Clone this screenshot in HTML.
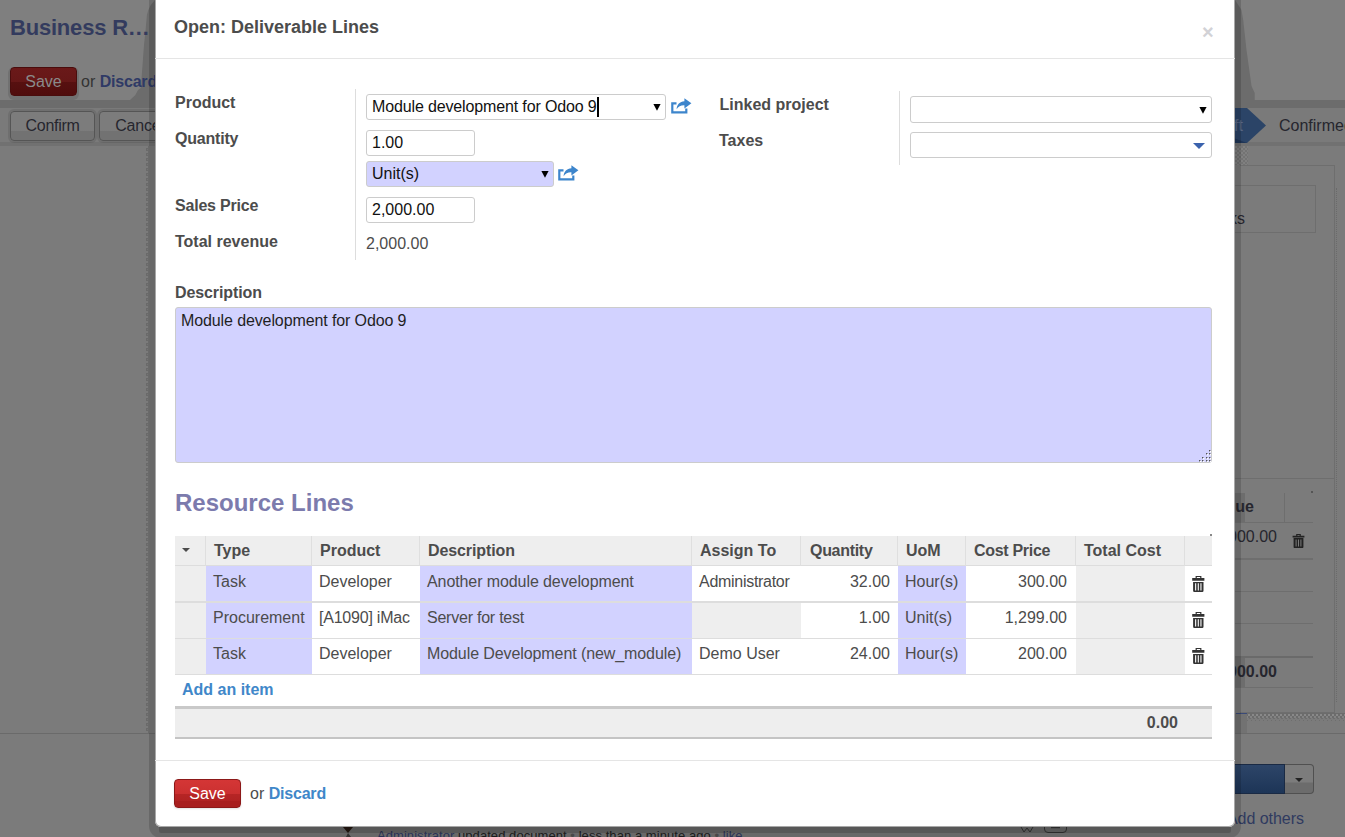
<!DOCTYPE html>
<html>
<head>
<meta charset="utf-8">
<title>Open: Deliverable Lines</title>
<style>
html,body{margin:0;padding:0;}
body{width:1345px;height:837px;overflow:hidden;position:relative;background:#fff;font-family:"Liberation Sans",sans-serif;font-size:13px;color:#4c4c4c;}
*{box-sizing:border-box;}
.abs{position:absolute;}
/* ---------- background page ---------- */
#bg{position:absolute;left:0;top:0;width:1345px;height:837px;overflow:hidden;background:#7b7b7b;}
#bg .title{left:10px;top:15px;font-size:22px;font-weight:bold;color:#333b5e;white-space:nowrap;line-height:26px;letter-spacing:-0.2px;}
#bg .btn-red{left:10px;top:67px;width:67px;height:29px;box-shadow:0 2px 0 2px rgba(0,0,0,.11);border-radius:4px;border:1px solid #4a0d0d;background:linear-gradient(#6a1919 0,#661717 50%,#571010 51%,#500d0d 100%);color:#8a8a8a;font-size:16px;line-height:27px;text-align:center;}
#bg .btn{height:30px;box-shadow:0 0 0 2px rgba(0,0,0,.09);border:1px solid #555;border-radius:4px;background:linear-gradient(#7c7c7c 0,#7c7c7c 66%,#727272 67%,#727272 100%);color:#26262e;font-size:16px;line-height:28px;text-align:center;}
/* ---------- modal ---------- */
#modal{position:absolute;left:155px;top:-10px;width:1080px;height:837px;background:#fff;border-radius:6px;box-shadow:inset 0 0 0 1px #a8a8a8,0 10px 0 -4px rgba(0,0,0,.16),0 5px 0 6px rgba(0,0,0,.15);}
#modal .hdr{left:0;top:0;width:1080px;height:69px;border-bottom:1px solid #e5e5e5;}
#modal h3{position:absolute;left:19px;top:25px;margin:0;font-size:18px;font-weight:bold;color:#4c4c4c;line-height:24px;white-space:nowrap;}
.close{position:absolute;left:1047px;top:30px;font-size:20px;font-weight:bold;color:#d2d2d6;line-height:24px;}
.lbl{position:absolute;font-weight:bold;font-size:16px;color:#4c4c4c;white-space:nowrap;line-height:20px;}
.inp{position:absolute;height:26px;border:1px solid #ccc;border-radius:3px;background:#fff;font-size:16px;color:#111;line-height:23px;padding-left:5px;white-space:nowrap;}
.req{background:#d2d2ff;}
.vsep{position:absolute;width:1px;background:#ddd;}
.caret{position:absolute;width:0;height:0;border-left:3.5px solid transparent;border-right:3.5px solid transparent;border-top:6.5px solid #000;}
table{border-collapse:separate;border-spacing:0;}
.cursor{position:absolute;left:230px;top:2px;width:2px;height:20px;background:#000;}
.ta{border:1px solid #ccc;border-radius:3px;background:#d2d2ff;font-size:16px;line-height:20px;color:#1f1f1f;padding:3px 5px;}

.lst{table-layout:fixed;font-size:16px;color:#4c4c4c;}
.lst th{height:30px;background:#eee;border-bottom:1px solid #ddd;border-right:1px solid #dfdfdf;text-align:left;font-weight:bold;padding:1px 0 0 8px;line-height:20px;white-space:nowrap;overflow:hidden;}
.lst th.h0{padding:0;position:relative;}
.lst th.hl{border-right:0;}
.lst td{height:36px;border-bottom:1px solid #ddd;padding:0 0 6px 7px;line-height:20px;white-space:nowrap;overflow:hidden;background:#fff;}
.lst tr.r0 td{height:37px;border-bottom:2px solid #ddd;padding-bottom:3px;}
.lst tr.r1 td{height:36px;}
.lst td.p{background:#d2d2ff;}
.lst td.g{background:#eee;}
.lst td.n{text-align:right;padding-right:8px;}
.lst td.tr{padding:0 0 0 7px;vertical-align:top;}
.trash{display:block;margin-top:9px;}
.lst tr.r0 .trash{margin-top:10px;}
.caret2{position:absolute;left:7px;top:12px;width:0;height:0;border-left:4px solid transparent;border-right:4px solid transparent;border-top:4px solid #4c4c4c;}
.add{font-size:16px;font-weight:bold;color:#3f87c9;line-height:20px;white-space:nowrap;}
.tfoot{background:#eee;border-top:3px solid #c9c9c9;border-bottom:2px solid #c4c4c4;font-size:16px;font-weight:bold;color:#4c4c4c;line-height:20px;}
.ftr{background:#e5e5e5;}
.btn-red2{width:67px;height:29px;border-radius:4px;border:1px solid #8c1818;box-shadow:0 1px 2px rgba(0,0,0,.12);background:linear-gradient(#d43636 0,#cb3030 52%,#b62525 53%,#b02222 78%,#a81e1e 79%,#a81e1e 100%);color:#fff;font-size:16px;line-height:27px;text-align:center;}
.sep{font-size:24px;font-weight:bold;color:#7c7bad;line-height:30px;white-space:nowrap;}

</style>
</head>
<body>
<div id="bg">
  <!-- top header area -->
  <div class="abs" style="left:0;top:0;width:1345px;height:100px;background:#7f7f7f;"></div>
  <div class="abs" style="left:0;top:100px;width:1345px;height:8px;background:#6c6c6c;"></div>
  <div class="abs" style="left:0;top:108px;width:1345px;height:34px;background:#7a7a7a;"></div>
  <div class="abs" style="left:0;top:142px;width:1345px;height:4px;background:#717171;"></div>
  <svg class="abs" style="left:0;top:0;" width="1345" height="160" viewBox="0 0 1345 160">
    <path d="M155 0L150.8 5L148.3 10L146.9 15L145.6 30L144 45L142.9 60L141.8 75L140.8 88L138 90L135.4 95L130 100L155 100Z" fill="#6c6c6c"/>
    <path d="M1235 0L1241.5 10L1243.2 20L1246.5 50L1251.5 86L1254.7 93L1254.7 100L1235 100Z" fill="#6c6c6c"/>
    <!-- status arrow -->
    <path d="M1200 108H1247L1266 125.5L1247 143H1200Z" fill="#2b4467"/>
    <path d="M1200 125.5L1247 143H1200Z" fill="#1f3556"/>
  </svg>
  <div class="abs" style="left:1195px;top:116px;width:48px;text-align:right;font-size:16px;line-height:20px;color:#566684;white-space:nowrap;">Draft</div>
  <div class="abs title">Business R…</div>
  <div class="abs btn-red">Save</div>
  <div class="abs" style="left:81px;top:72px;font-size:16px;line-height:20px;color:#333;white-space:nowrap;">or <b style="color:#2f3a66;letter-spacing:-0.2px">Discard</b></div>
  <div class="abs btn" style="left:10px;top:111px;width:85px;letter-spacing:-0.3px;">Confirm</div>
  <div class="abs btn" style="left:99px;top:111px;width:81px;letter-spacing:-0.2px;">Cancel</div>
  <div class="abs" style="left:1279px;top:116px;font-size:16px;line-height:20px;color:#26262e;white-space:nowrap;">Confirmed</div>

  <!-- sheet right -->
  <div class="abs" style="left:1240px;top:165px;width:95px;height:548px;border:1px solid #6e6e6e;border-left:0;"></div>
  <div class="abs" style="left:1200px;top:185px;width:116px;height:48px;border:1px solid #6e6e6e;"></div>
  <div class="abs" style="left:1200px;top:209px;width:45px;text-align:right;font-size:16px;line-height:20px;color:#26262e;">Tasks</div>
  <div class="abs" style="left:1336px;top:188px;width:0;height:514px;border-left:1px dotted #6a6a6a;"></div>
  <div class="abs" style="left:1235px;top:478px;width:100px;height:1px;background:#6e6e6e;"></div>
  <div class="abs" style="left:1235px;top:493px;width:10px;height:30px;background:#6d6d6d;"></div>
  <div class="abs" style="left:1284px;top:493px;width:1px;height:30px;background:#6e6e6e;"></div>
  <div class="abs" style="left:1200px;top:497px;width:54px;text-align:right;font-size:16px;font-weight:bold;line-height:20px;color:#26262e;">Value</div>
  <div class="abs" style="left:1235px;top:522px;width:78px;height:1px;background:#6e6e6e;"></div>
  <div class="abs" style="left:1200px;top:527px;width:77px;text-align:right;font-size:16px;line-height:20px;color:#26262e;">2,000.00</div>
  <svg class="abs" style="left:1292px;top:533px;" width="13" height="16" viewBox="0 0 13 15"><path d="M4.2 0.6H8.8V2.2H12.4V4H0.6V2.2H4.2ZM5.4 1.5V2.2H7.6V1.5Z" fill="#222"/><path d="M1.6 4.6H11.4V13.4Q11.4 14.6 10.2 14.6H2.8Q1.6 14.6 1.6 13.4ZM3.6 6V13H4.6V6ZM6 6V13H7V6ZM8.4 6V13H9.4V6Z" fill="#222" fill-rule="evenodd"/></svg>
  <div class="abs" style="left:1235px;top:558px;width:78px;height:2px;background:#6e6e6e;"></div>
  <div class="abs" style="left:1235px;top:591px;width:78px;height:1px;background:#6e6e6e;"></div>
  <div class="abs" style="left:1235px;top:623px;width:78px;height:1px;background:#6e6e6e;"></div>
  <div class="abs" style="left:1235px;top:656px;width:78px;height:2px;background:#6a6a6a;"></div>
  <div class="abs" style="left:1235px;top:658px;width:10px;height:29px;background:#6d6d6d;"></div>
  <div class="abs" style="left:1200px;top:662px;width:77px;text-align:right;font-size:16px;font-weight:bold;line-height:20px;color:#26262e;">2,000.00</div>
  <div class="abs" style="left:1235px;top:687px;width:78px;height:1px;background:#6e6e6e;"></div>
  <div class="abs" style="left:1311px;top:491px;width:2px;height:2px;background:#555;"></div>

  <svg class="abs" style="left:0;top:0;" width="1345" height="837" viewBox="0 0 1345 837">
    <defs>
      <pattern id="d1" x="1240" y="714" width="4" height="8" patternUnits="userSpaceOnUse">
        <rect x="0" y="0" width="2" height="2" fill="#898989"/><rect x="2" y="0" width="2" height="2" fill="#6c6c6c"/>
        <rect x="0" y="2" width="2" height="2" fill="#6c6c6c"/><rect x="2" y="2" width="2" height="2" fill="#838383"/>
        <rect x="1" y="4" width="2" height="1" fill="#6e6e6e"/>
        <rect x="3" y="6" width="1" height="1" fill="#6e6e6e"/>
      </pattern>
      <pattern id="d2" x="146" y="146" width="3" height="5" patternUnits="userSpaceOnUse">
        <rect x="0" y="0" width="3" height="5" fill="#6a6a6a"/>
        <rect x="0" y="0" width="2" height="2" fill="#7b7b7b"/><rect x="1" y="3" width="1" height="1" fill="#747474"/>
      </pattern>
      <pattern id="d3" x="1235" y="146" width="4" height="4" patternUnits="userSpaceOnUse">
        <rect x="0" y="0" width="4" height="4" fill="#737373"/>
        <rect x="0" y="0" width="2" height="2" fill="#808080"/><rect x="2" y="2" width="2" height="2" fill="#808080"/>
      </pattern>
    </defs>
    <rect x="1240" y="714" width="105" height="8" fill="url(#d1)"/>
    <rect x="146" y="146" width="3" height="587" fill="url(#d2)"/>
    <rect x="1235" y="146" width="13" height="19" fill="url(#d3)"/>
    <rect x="1235" y="713" width="12" height="20" fill="#727272"/>
    <rect x="1247" y="713" width="98" height="1" fill="#6c6c6c"/>
    <rect x="1236" y="713" width="11" height="1" fill="#3a4a78"/>
  </svg>
  <!-- bottom area -->
  <div class="abs" style="left:0;top:733px;width:1345px;height:1px;background:#6a6a6a;"></div>
  <div class="abs" style="left:1200px;top:764px;width:85px;height:30px;background:linear-gradient(#2d4568,#1d3557);border:1px solid #1a2a44;"></div>
  <div class="abs" style="left:1285px;top:764px;width:29px;height:30px;border:1px solid #505050;border-left:0;border-radius:0 4px 4px 0;background:linear-gradient(#7c7c7c 0,#7c7c7c 62%,#6c6c6c 63%,#6c6c6c 100%);"></div>
  <div class="abs" style="left:1295px;top:778px;width:0;height:0;border-left:4px solid transparent;border-right:4px solid transparent;border-top:4px solid #222;"></div>
  <div class="abs" style="left:1227px;top:809px;font-size:16px;line-height:20px;color:#2f3a60;white-space:nowrap;letter-spacing:-0.05px;">Add others</div>
  <div class="abs" style="left:377px;top:826px;font-size:13px;line-height:20px;color:#222;white-space:nowrap;letter-spacing:0.06px;"><span style="color:#323c66">Administrator</span> updated document <span style="color:#555">•</span> less than a minute ago <span style="color:#555">•</span> <span style="color:#323c66">like</span></div>
  <svg class="abs" style="left:330px;top:826px;" width="760" height="11" viewBox="0 0 760 11">
    <path d="M13 1H23L18 7Z" fill="#2a1c14"/>
    <path d="M16 11L18 7L21 11Z" fill="#3a3a3a"/>
    <path d="M691 1L694 6L697 2L700 6L703 1" fill="none" stroke="#3c3c3c" stroke-width="1"/>
    <path d="M714.5 0V3Q714.5 6.5 718 6.5H733Q736.5 6.5 736.5 3V0" fill="none" stroke="#3c3c3c" stroke-width="1"/>
    <path d="M721 1.5H730" fill="none" stroke="#3c3c3c" stroke-width="1.4"/>
  </svg>
</div>
<div id="modal">

  <div class="abs hdr"></div>
  <h3>Open: Deliverable Lines</h3>
  <div class="close">×</div>

  <!-- left group -->
  <div class="lbl" style="left:20px;top:103px;">Product</div>
  <div class="lbl" style="left:20px;top:139px;letter-spacing:-0.2px;">Quantity</div>
  <div class="lbl" style="left:20px;top:206px;letter-spacing:-0.2px;">Sales Price</div>
  <div class="lbl" style="left:20px;top:242px;">Total revenue</div>
  <div class="vsep" style="left:200px;top:99px;height:171px;"></div>
  <div class="inp" style="left:211px;top:104px;width:300px;"><span style="letter-spacing:-0.14px">Module development for Odoo 9</span><span class="cursor"></span></div>
  <svg class="abs" style="left:497.5px;top:114.1px;" width="8" height="7" viewBox="0 0 8 7"><path d="M0.4 0H7.6L4 6.8Z" fill="#000"/></svg>
  <svg class="abs share" style="left:515px;top:108px;" width="22" height="16" viewBox="0 0 22 16"><path d="M1.2 4.2H6.5V6.4H3.4V13.2H15.2V10.6H17.4V15.4H1.2Z" fill="#3d85cc"/><path d="M14.4 0.2L21.4 5.3L14.4 10.4V7.3C10.8 7.2 8.3 8.4 6.6 11.3C6.9 6.6 9.8 3.6 14.4 3.3Z" fill="#3d85cc"/></svg>
  <div class="inp" style="left:211px;top:140px;width:109px;">1.00</div>
  <div class="inp req" style="left:211px;top:171px;width:188px;">Unit(s)</div>
  <svg class="abs" style="left:385.5px;top:181.1px;" width="8" height="7" viewBox="0 0 8 7"><path d="M0.4 0H7.6L4 6.8Z" fill="#000"/></svg>
  <svg class="abs share" style="left:402px;top:175px;" width="22" height="16" viewBox="0 0 22 16"><path d="M1.2 4.2H6.5V6.4H3.4V13.2H15.2V10.6H17.4V15.4H1.2Z" fill="#3d85cc"/><path d="M14.4 0.2L21.4 5.3L14.4 10.4V7.3C10.8 7.2 8.3 8.4 6.6 11.3C6.9 6.6 9.8 3.6 14.4 3.3Z" fill="#3d85cc"/></svg>
  <div class="inp" style="left:211px;top:207px;width:109px;">2,000.00</div>
  <div class="abs" style="left:211px;top:244px;font-size:16px;line-height:20px;color:#4c4c4c;">2,000.00</div>

  <!-- right group -->
  <div class="lbl" style="left:564.5px;top:105px;">Linked project</div>
  <div class="lbl" style="left:564px;top:141px;">Taxes</div>
  <div class="vsep" style="left:744px;top:101px;height:74px;"></div>
  <div class="inp" style="left:755px;top:106px;width:302px;height:27px;"></div>
  <svg class="abs" style="left:1043.5px;top:116.6px;" width="8" height="7" viewBox="0 0 8 7"><path d="M0.4 0H7.6L4 6.8Z" fill="#000"/></svg>
  <div class="inp" style="left:755px;top:142px;width:302px;"></div>
  <div class="caret" style="left:1038px;top:153px;border-left-width:6px;border-right-width:6px;border-top:6px solid #3a62ad;"></div>

  <!-- description -->
  <div class="lbl" style="left:20px;top:293px;letter-spacing:-0.1px;">Description</div>
  <div class="abs ta" style="left:20px;top:317px;width:1037px;height:156px;letter-spacing:-0.11px;">Module development for Odoo 9</div>

<svg class="abs" style="left:1040px;top:456px;" width="16" height="16" viewBox="0 0 16 16"><rect x="14" y="4" width="1.4" height="1.4" fill="#555"/><rect x="15" y="5" width="1.4" height="1.4" fill="#fff"/><rect x="11" y="7" width="1.4" height="1.4" fill="#555"/><rect x="12" y="8" width="1.4" height="1.4" fill="#fff"/><rect x="14" y="7" width="1.4" height="1.4" fill="#555"/><rect x="15" y="8" width="1.4" height="1.4" fill="#fff"/><rect x="7" y="11" width="1.4" height="1.4" fill="#555"/><rect x="8" y="12" width="1.4" height="1.4" fill="#fff"/><rect x="11" y="11" width="1.4" height="1.4" fill="#555"/><rect x="12" y="12" width="1.4" height="1.4" fill="#fff"/><rect x="14" y="11" width="1.4" height="1.4" fill="#555"/><rect x="15" y="12" width="1.4" height="1.4" fill="#fff"/><rect x="4" y="14" width="1.4" height="1.4" fill="#555"/><rect x="5" y="15" width="1.4" height="1.4" fill="#fff"/><rect x="7" y="14" width="1.4" height="1.4" fill="#555"/><rect x="8" y="15" width="1.4" height="1.4" fill="#fff"/><rect x="11" y="14" width="1.4" height="1.4" fill="#555"/><rect x="12" y="15" width="1.4" height="1.4" fill="#fff"/><rect x="14" y="14" width="1.4" height="1.4" fill="#555"/><rect x="15" y="15" width="1.4" height="1.4" fill="#fff"/></svg>
  <div class="abs" style="left:1055px;top:544px;width:2px;height:2px;background:#888;"></div>
  <div class="abs sep" style="left:20px;top:498px;">Resource Lines</div>

  <table class="abs lst" style="left:20px;top:546px;width:1037px;">
    <colgroup><col style="width:31px"><col style="width:106px"><col style="width:108px"><col style="width:272px"><col style="width:109px"><col style="width:97px"><col style="width:68px"><col style="width:110px"><col style="width:109px"><col style="width:27px"></colgroup>
    <thead><tr><th class="h0"><span class="caret2"></span></th><th>Type</th><th>Product</th><th style="letter-spacing:-0.1px">Description</th><th>Assign To</th><th style="letter-spacing:-0.3px;padding-left:9px">Quantity</th><th>UoM</th><th style="letter-spacing:-0.3px">Cost Price</th><th>Total Cost</th><th class="hl"></th></tr></thead>
    <tbody>
      <tr class="r0"><td class="g"></td><td class="p">Task</td><td>Developer</td><td class="p" style="letter-spacing:-0.09px">Another module development</td><td style="letter-spacing:-0.29px">Administrator</td><td class="n">32.00</td><td class="p">Hour(s)</td><td class="n" style="padding-right:9px">300.00</td><td class="g"></td><td class="tr"><svg class="trash" width="13" height="16" viewBox="0 0 13 16"><path d="M3.6 0H9.4V2H12.4V4.8H0.2V2H3.6ZM4.8 1V2H8.2V1Z" fill="#333"/><path d="M1.1 6H11.5V14.8Q11.5 16 10.3 16H2.3Q1.1 16 1.1 14.8ZM3.1 7.2V14.6H4.2V7.2ZM5.75 7.2V14.6H6.85V7.2ZM8.4 7.2V14.6H9.5V7.2Z" fill="#333" fill-rule="evenodd"/></svg></td></tr>
      <tr class="r1"><td class="g"></td><td class="p">Procurement</td><td style="letter-spacing:-0.22px">[A1090] iMac</td><td class="p" style="letter-spacing:-0.23px">Server for test</td><td class="g"></td><td class="n">1.00</td><td class="p">Unit(s)</td><td class="n" style="padding-right:9px">1,299.00</td><td class="g"></td><td class="tr"><svg class="trash" width="13" height="16" viewBox="0 0 13 16"><path d="M3.6 0H9.4V2H12.4V4.8H0.2V2H3.6ZM4.8 1V2H8.2V1Z" fill="#333"/><path d="M1.1 6H11.5V14.8Q11.5 16 10.3 16H2.3Q1.1 16 1.1 14.8ZM3.1 7.2V14.6H4.2V7.2ZM5.75 7.2V14.6H6.85V7.2ZM8.4 7.2V14.6H9.5V7.2Z" fill="#333" fill-rule="evenodd"/></svg></td></tr>
      <tr class="r2"><td class="g"></td><td class="p">Task</td><td>Developer</td><td class="p" style="letter-spacing:-0.09px">Module Development (new_module)</td><td>Demo User</td><td class="n">24.00</td><td class="p">Hour(s)</td><td class="n" style="padding-right:9px">200.00</td><td class="g"></td><td class="tr"><svg class="trash" width="13" height="16" viewBox="0 0 13 16"><path d="M3.6 0H9.4V2H12.4V4.8H0.2V2H3.6ZM4.8 1V2H8.2V1Z" fill="#333"/><path d="M1.1 6H11.5V14.8Q11.5 16 10.3 16H2.3Q1.1 16 1.1 14.8ZM3.1 7.2V14.6H4.2V7.2ZM5.75 7.2V14.6H6.85V7.2ZM8.4 7.2V14.6H9.5V7.2Z" fill="#333" fill-rule="evenodd"/></svg></td></tr>
    </tbody>
  </table>
  <div class="abs add" style="left:27px;top:690px;">Add an item</div>
  <div class="abs tfoot" style="left:20px;top:716px;width:1037px;height:33px;"><span style="position:absolute;right:34px;top:4px;">0.00</span></div>

  <div class="abs ftr" style="left:0;top:770px;width:1080px;height:1px;"></div>
  <div class="abs btn-red2" style="left:19px;top:789px;">Save</div>
  <div class="abs" style="left:95px;top:794px;font-size:16px;line-height:20px;color:#4c4c4c;white-space:nowrap;">or <b style="color:#3f87c9;letter-spacing:-0.2px">Discard</b></div>
</div>
</body>
</html>
